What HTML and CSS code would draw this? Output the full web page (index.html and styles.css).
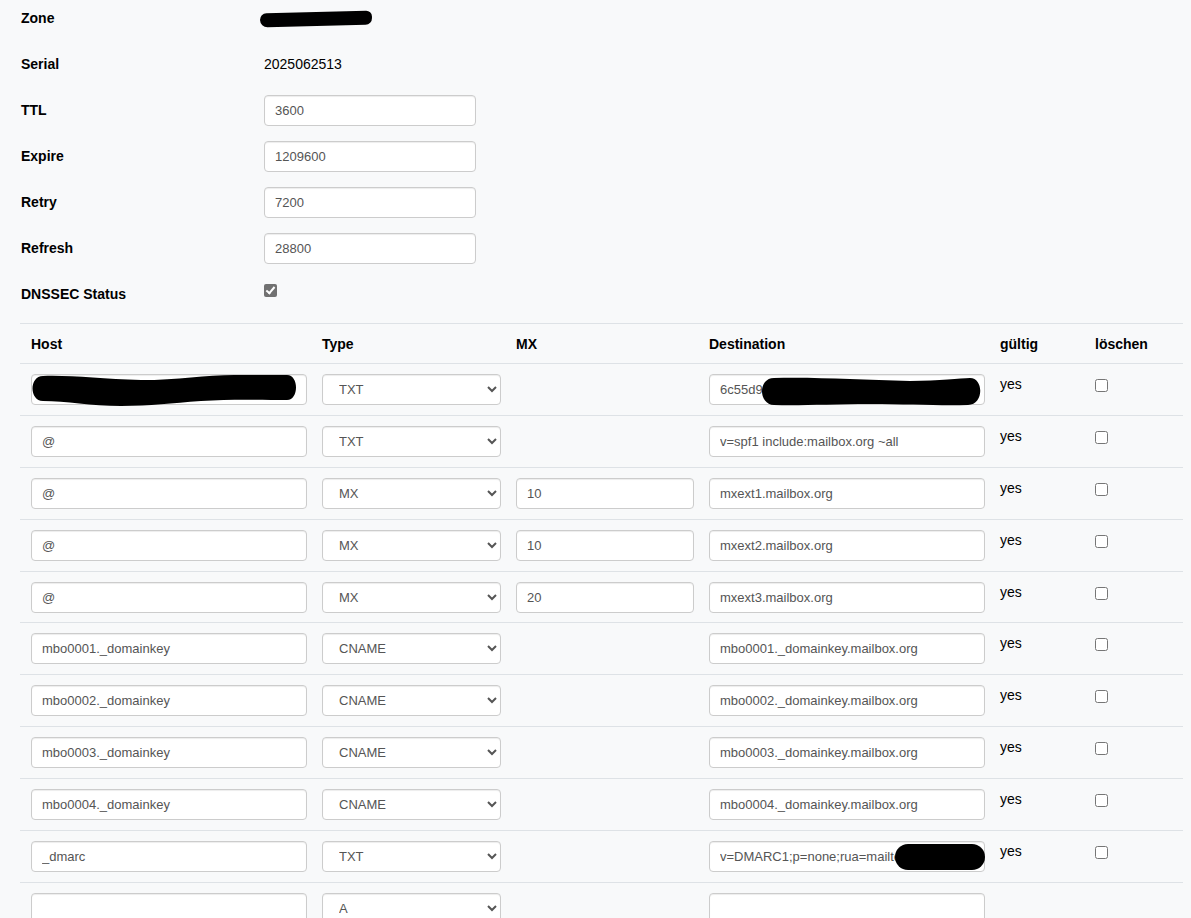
FILE: index.html
```html
<!DOCTYPE html>
<html lang="de">
<head>
  <meta charset="UTF-8" />
  <title>Zone bearbeiten</title>
  <link rel="stylesheet" href="styles.css">
</head>
<body>
  <div class="page">
    <!-- Zone settings -->
    <div class="zone-form">
      <label>Zone</label>
      <div><span class="blob blob-zone"></span></div>

      <label>Serial</label>
      <div>2025062513</div>

      <label>TTL</label>
      <input class="field" type="text" value="3600">

      <label>Expire</label>
      <input class="field" type="text" value="1209600">

      <label>Retry</label>
      <input class="field" type="text" value="7200">

      <label>Refresh</label>
      <input class="field" type="text" value="28800">

      <label>DNSSEC Status</label>
      <div><input class="dnssec" type="checkbox" checked disabled></div>
    </div>

    <!-- Records -->
    <table class="records">
      <colgroup>
        <col class="c-host"><col class="c-type"><col class="c-mx"><col class="c-dest"><col class="c-valid"><col class="c-del">
      </colgroup>
      <thead>
        <tr>
          <th>Host</th>
          <th>Type</th>
          <th>MX</th>
          <th>Destination</th>
          <th>gültig</th>
          <th>löschen</th>
        </tr>
      </thead>
      <tbody id="rows"></tbody>
    </table>
  </div>

  <script>
    var records = [
      { host: "", type: "TXT", mx: null, dest: "6c55d9c", redactHost: true, redactDest: "long" },
      { host: "@", type: "TXT", mx: null, dest: "v=spf1 include:mailbox.org ~all" },
      { host: "@", type: "MX", mx: "10", dest: "mxext1.mailbox.org" },
      { host: "@", type: "MX", mx: "10", dest: "mxext2.mailbox.org" },
      { host: "@", type: "MX", mx: "20", dest: "mxext3.mailbox.org" },
      { host: "mbo0001._domainkey", type: "CNAME", mx: null, dest: "mbo0001._domainkey.mailbox.org" },
      { host: "mbo0002._domainkey", type: "CNAME", mx: null, dest: "mbo0002._domainkey.mailbox.org" },
      { host: "mbo0003._domainkey", type: "CNAME", mx: null, dest: "mbo0003._domainkey.mailbox.org" },
      { host: "mbo0004._domainkey", type: "CNAME", mx: null, dest: "mbo0004._domainkey.mailbox.org" },
      { host: "_dmarc", type: "TXT", mx: null, dest: "v=DMARC1;p=none;rua=mailto", redactDest: "short" }
    ];
    var types = ["A", "AAAA", "CNAME", "MX", "NS", "TXT", "SRV", "CAA"];

    function typeSelect(selected) {
      var html = '<select class="field">';
      types.forEach(function (t) {
        html += '<option' + (t === selected ? ' selected' : '') + '>' + t + '</option>';
      });
      return html + '</select>';
    }

    var hostBlob = '<svg class="blob-svg" width="268" height="32" viewBox="0 0 268 32">' +
      '<path d="M12 2 C40 1 70 5 110 6 C150 6 180 0 210 1 L256 1 C268 1 268 26 256 26 C230 26 200 25 170 27 C140 29 120 32 90 32 C60 32 35 27 12 27 C-2 27 -2 2 12 2 Z" fill="#000"/></svg>';
    var destBlob = '<svg class="blob-svg" width="222" height="32" viewBox="0 0 222 32">' +
      '<path d="M14 3 C60 2 100 5 150 6 C180 6 200 3 210 3 C224 3 224 30 208 30 C180 31 150 29 110 29 C70 29 40 31 14 30 C-2 29 -2 3 14 3 Z" fill="#000"/></svg>';
    var shortBlob = '<svg class="blob-svg" width="90" height="26" viewBox="0 0 90 26">' +
      '<rect x="0" y="0" width="90" height="26" rx="13" fill="#000"/></svg>';

    var tbody = document.getElementById("rows");
    records.forEach(function (r) {
      var tr = document.createElement("tr");
      tr.innerHTML =
        '<td><div class="wrap"><input class="field" type="text" value="' + r.host + '">' +
          (r.redactHost ? '<span class="cover cover-host">' + hostBlob + '</span>' : '') + '</div></td>' +
        '<td>' + typeSelect(r.type) + '</td>' +
        '<td>' + (r.mx ? '<input class="field" type="text" value="' + r.mx + '">' : '') + '</td>' +
        '<td><div class="wrap"><input class="field" type="text" value="' + r.dest + '">' +
          (r.redactDest === "long" ? '<span class="cover cover-dest">' + destBlob + '</span>' : '') +
          (r.redactDest === "short" ? '<span class="cover cover-short">' + shortBlob + '</span>' : '') + '</div></td>' +
        '<td class="valid">yes</td>' +
        '<td><input class="del" type="checkbox"></td>';
      tbody.appendChild(tr);
    });

    // empty row for a new record
    var blank = document.createElement("tr");
    blank.innerHTML =
      '<td><input class="field" type="text" value=""></td>' +
      '<td>' + typeSelect("A") + '</td>' +
      '<td></td>' +
      '<td><input class="field" type="text" value=""></td>' +
      '<td></td><td></td>';
    tbody.appendChild(blank);
  </script>
</body>
</html>
```

FILE: styles.css
```css
body {
  margin: 0;
  background: #f8f9fa;
  color: #000;
  font-family: "Liberation Sans", Arial, sans-serif;
  font-size: 14px;
  line-height: 1.5;
}
.page {
  padding: 3px 8px 0 20px;
}
.zone-form {
  display: grid;
  grid-template-columns: 244px 212px;
  grid-auto-rows: 31px;
  row-gap: 15px;
  align-items: center;
}
.zone-form label {
  font-weight: bold;
  padding-left: 1px;
}
.field {
  box-sizing: border-box;
  width: 100%;
  height: 31px;
  padding: 0 10px;
  border: 1px solid #ccc;
  border-radius: 4px;
  background: #fff;
  color: #555;
  font-family: "Liberation Sans", Arial, sans-serif;
  font-size: 13px;
  box-shadow: inset 0 1px 1px rgba(0, 0, 0, 0.075);
}
select.field {
  padding: 0 8px 0 12px;
}
.dnssec {
  appearance: none;
  -webkit-appearance: none;
  position: relative;
  display: block;
  box-sizing: border-box;
  width: 13px;
  height: 13px;
  margin: -8px 0 0 0;
  border-radius: 2px;
  background: #717171;
}
.dnssec::after {
  content: "";
  position: absolute;
  left: 4px;
  top: 1px;
  width: 3px;
  height: 7px;
  border: solid #fff;
  border-width: 0 2px 2px 0;
  transform: rotate(40deg);
}
.blob {
  display: inline-block;
  background: #000;
}
.blob-zone {
  width: 112px;
  height: 14px;
  border-radius: 8px 7px 8px 9px;
  margin: 0 0 0 -4px;
  transform: rotate(-1.5deg);
  vertical-align: middle;
}
.records {
  width: 1163px;
  margin-top: 13px;
  border-collapse: collapse;
  table-layout: fixed;
}
.c-host { width: 291px; }
.c-type { width: 194px; }
.c-mx { width: 193px; }
.c-dest { width: 291px; }
.c-valid { width: 95px; }
.c-del { width: 99px; }
.records th,
.records td {
  padding: 10px 4px 9.9px 11px;
  border-top: 1px solid #dee2e6;
  text-align: left;
  vertical-align: top;
}
.records th {
  padding-bottom: 8px;
}
.wrap {
  position: relative;
}
.cover {
  position: absolute;
  top: 0;
  line-height: 0;
}
.cover-host { left: 0; }
.cover-dest { left: 51px; top: 1px; }
.cover-short { left: 186px; top: 3px; }
.del {
  margin: 5px 0 0 0;
  width: 13px;
  height: 13px;
}
```
